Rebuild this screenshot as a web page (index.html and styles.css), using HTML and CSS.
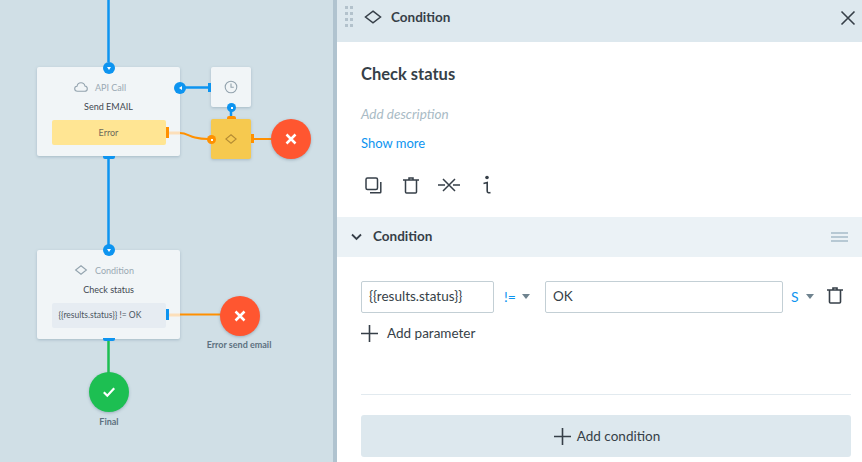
FILE: index.html
```html
<!DOCTYPE html>
<html lang="en">
<head>
<meta charset="utf-8">
<title>Condition</title>
<link rel="stylesheet" href="styles.css">
</head>
<body>
<div class="app">
  <section class="canvas">
    <div class="node card card-api">
      <div class="card-type">
        <svg width="14" height="10" viewBox="0 0 14 10"><path d="M3.500 9.300C1.800 9.300.7 8.200.7 6.800C.7 5.400 1.700 4.400 3 4.300C3.400 2 5 .7 7 .7C9 .7 10.500 2 10.900 4C12.300 4.200 13.300 5.300 13.300 6.700C13.300 8.200 12.200 9.300 10.700 9.300Z" fill="none" stroke="#93a3ae" stroke-width="1.100"/></svg>
        <span>API Call</span>
      </div>
      <div class="card-title">Send EMAIL</div>
      <div class="card-slot slot-error">Error</div>
    </div>

    <div class="node card card-condition">
      <div class="card-type">
        <svg width="14" height="10" viewBox="0 0 14 10"><path d="M7 .8L12.400 5L7 9.200L1.600 5Z" fill="none" stroke="#93a3ae" stroke-width="1.100"/></svg>
        <span>Condition</span>
      </div>
      <div class="card-title">Check status</div>
      <div class="card-slot slot-cond">{{results.status}} != OK</div>
    </div>

    <div class="node square square-timer">
      <svg width="14" height="14" viewBox="0 0 14 14"><circle cx="7" cy="7" r="5.800" fill="none" stroke="#93a3ae" stroke-width="1.100"/><path d="M7 3.500V7.300H9.800" fill="none" stroke="#93a3ae" stroke-width="1.100"/></svg>
    </div>
    <div class="node square square-yellow">
      <svg width="12" height="10" viewBox="0 0 12 10"><path d="M6 .8L11.200 5L6 9.200L.8 5Z" fill="none" stroke="#b48b33" stroke-width="1.100"/></svg>
    </div>

    <svg class="wires" width="333" height="462" viewBox="0 0 333 462">
      <path d="M108.500 0V62" class="w-blue"/>
      <path d="M108.500 156V246" class="w-blue"/>
      <path d="M180 87.500H209" class="w-blue"/>
      <path d="M231 107V117" class="w-blue"/>
      <path d="M168 133H180" class="w-fade"/>
      <path d="M180 133C186 133 189 136 195 137.500C199 138.500 203 139 208 139" class="w-orange"/>
      <path d="M251 139H275" class="w-orange"/>
      <path d="M168 315H180" class="w-fade"/>
      <path d="M180 314.500H222" class="w-orange"/>
      <path d="M108.500 338V375" class="w-green"/>
    </svg>

    <div class="node tab tab-api-bottom"></div>
    <div class="node tab tab-cond-bottom"></div>
    <div class="node tab tab-yellow-top"></div>
    <div class="node vtab vtab-timer"></div>
    <div class="node vtab vtab-error"></div>
    <div class="node vtab vtab-yellow"></div>
    <div class="node vtab vtab-cond"></div>

    <div class="node port port-api-in"><i class="tri-down"></i></div>
    <div class="node port port-cond-in"><i class="tri-down"></i></div>
    <div class="node port port-api-right"><i class="tri-left"></i></div>
    <div class="node port port-small port-timer-bottom"><i class="dot"></i></div>
    <div class="node port port-small port-orange port-yellow-left"><i class="dot"></i></div>

    <div class="node end end-red end-a">
      <svg width="14" height="14" viewBox="0 0 14 14"><path d="M2.500 2.500L11.500 11.500M11.500 2.500L2.500 11.500" stroke="#fff" stroke-width="2.500"/></svg>
    </div>
    <div class="node end end-red end-b">
      <svg width="14" height="14" viewBox="0 0 14 14"><path d="M2.500 2.500L11.500 11.500M11.500 2.500L2.500 11.500" stroke="#fff" stroke-width="2.500"/></svg>
    </div>
    <div class="node end end-green end-c">
      <svg width="14" height="12" viewBox="0 0 14 12"><path d="M1.800 6.200L5.300 9.700L12.200 2.300" fill="none" stroke="#fff" stroke-width="2.200"/></svg>
    </div>
    <div class="node end-label label-b">Error send email</div>
    <div class="node end-label label-c">Final</div>
  </section>

  <aside class="panel">
    <header class="panel-head">
      <div class="grip"><i></i><i></i><i></i><i></i><i></i><i></i><i></i><i></i></div>
      <svg class="head-diamond" width="18" height="14" viewBox="0 0 18 14"><path d="M9 1.200L16.500 7L9 12.800L1.500 7Z" fill="none" stroke="#363f48" stroke-width="1.500"/></svg>
      <span class="head-title">Condition</span>
      <svg class="head-close" width="16" height="16" viewBox="0 0 16 16"><path d="M1.500 1.500L14.500 14.500M14.500 1.500L1.500 14.500" stroke="#363f48" stroke-width="1.600"/></svg>
    </header>

    <div class="summary">
      <h1 class="name">Check status</h1>
      <p class="desc">Add description</p>
      <a class="more">Show more</a>
      <div class="tools">
        <svg width="17" height="17" viewBox="0 0 17 17"><rect x="1" y="1" width="11.500" height="11.500" rx="1.500" fill="none" stroke="#363f48" stroke-width="1.500"/><path d="M15.800 5V15C15.800 15.500 15.500 15.800 15 15.800H5" fill="none" stroke="#363f48" stroke-width="1.500"/></svg>
        <svg class="tool-trash" width="16" height="17" viewBox="0 0 16 17"><path d="M0 3H16M6 3V1H10V3M2.500 3V15C2.500 15.700 2.900 16 3.500 16H12.500C13.100 16 13.500 15.700 13.500 15V3" fill="none" stroke="#363f48" stroke-width="1.500"/></svg>
        <svg class="tool-cut" width="22" height="16" viewBox="0 0 22 16"><path d="M0 8H7M15 8H22M5 2L17 14M17 2L5 14" fill="none" stroke="#363f48" stroke-width="1.500"/></svg>
        <svg class="tool-info" width="10" height="20" viewBox="0 0 10 20"><circle cx="5" cy="2.500" r="1.800" fill="#363f48"/><path d="M1.500 8.500L5.200 7.500V16C5.200 17.500 6.500 18.300 8.500 17.500" fill="none" stroke="#363f48" stroke-width="1.600"/></svg>
      </div>
    </div>

    <div class="section-head">
      <svg width="11" height="8" viewBox="0 0 11 8"><path d="M1 1.500L5.500 6L10 1.500" fill="none" stroke="#363f48" stroke-width="1.800"/></svg>
      <span class="section-title">Condition</span>
      <div class="burger"><i></i><i></i><i></i></div>
    </div>

    <div class="rule-area">
      <div class="rule-row">
        <div class="field field-left">{{results.status}}</div>
        <span class="op">!=</span>
        <i class="caret caret-op"></i>
        <div class="field field-right">OK</div>
        <span class="type">S</span>
        <i class="caret caret-type"></i>
        <svg class="rule-trash" width="16" height="17" viewBox="0 0 16 17"><path d="M0 3H16M6 3V1H10V3M2.500 3V15C2.500 15.700 2.900 16 3.500 16H12.500C13.100 16 13.500 15.700 13.500 15V3" fill="none" stroke="#363f48" stroke-width="1.600"/></svg>
      </div>
      <div class="add-param">
        <svg width="17" height="17" viewBox="0 0 17 17"><path d="M8.500 0V17M0 8.500H17" stroke="#363f48" stroke-width="1.600"/></svg>
        <span>Add parameter</span>
      </div>
    </div>

    <div class="footer">
      <button class="add-cond">
        <svg width="17" height="17" viewBox="0 0 17 17"><path d="M8.500 0V17M0 8.500H17" stroke="#363f48" stroke-width="1.600"/></svg>
        <span>Add condition</span>
      </button>
    </div>
  </aside>
</div>
</body>
</html>
```

FILE: styles.css
```css
* { box-sizing: border-box; }
html, body { margin: 0; padding: 0; }
body {
  width: 862px;
  height: 462px;
  overflow: hidden;
  font-family: Lato, "Noto Sans", sans-serif;
  color: #363f48;
  background: #fff;
}
.app { display: flex; width: 862px; height: 462px; }

/* canvas */
.canvas {
  position: relative;
  flex: 0 0 337px;
  height: 462px;
  background: #d0dfe6;
  border-right: 4px solid #b0c3cf;
}
.wires { position: absolute; left: 0; top: 0; }
.wires path { fill: none; }
.w-blue { stroke: #0d94f0; stroke-width: 2.500; }
.w-orange { stroke: #ff9000; stroke-width: 2; }
.w-green { stroke: #1dbf52; stroke-width: 2.500; }
.w-fade { stroke: #fcdfba; stroke-width: 3; }

.node { position: absolute; }
.card {
  left: 37px;
  width: 143px;
  height: 89px;
  padding: 0 14px;
  background: #f1f5f7;
  border-radius: 2px;
  box-shadow: 0 1px 3px rgba(90, 120, 140, .35);
  display: flex;
  flex-direction: column;
  align-items: center;
}
.card-api { top: 67px; }
.card-condition { top: 250px; }
.card-type {
  align-self: flex-start;
  height: 20px;
  margin: 10px 0 0 23px;
  display: flex;
  align-items: center;
  gap: 7px;
  font-size: 9px;
  color: #9aa9b3;
}
.card-title { height: 19px; line-height: 19px; font-size: 9px; color: #3f4850; }
.card-slot {
  width: 114px;
  height: 25px;
  margin-top: 4px;
  border-radius: 2px;
  font-size: 9px;
  line-height: 25px;
  color: #6d6a5c;
  text-align: center;
}
.slot-error { background: #ffe593; }
.slot-cond { background: #e6ecf2; color: #4a5560; font-size: 8.500px; line-height: 24px; text-align: left; padding-left: 7px; }

.square {
  left: 211px;
  width: 40px;
  height: 40px;
  border-radius: 2px;
  box-shadow: 0 1px 3px rgba(90, 120, 140, .35);
  display: flex;
  align-items: center;
  justify-content: center;
}
.square-timer { top: 67px; background: #f1f5f7; }
.square-yellow { top: 119px; background: #f6c94f; }

.tab { width: 12px; height: 3px; background: #0d94f0; border-radius: 0 0 2px 2px; }
.tab-api-bottom { left: 103px; top: 156px; }
.tab-cond-bottom { left: 103px; top: 338px; }
.tab-yellow-top { left: 227px; top: 116px; background: #ff9000; border-radius: 2px 2px 0 0; width: 9px; }
.vtab { width: 3px; height: 11px; background: #0d94f0; }
.vtab-timer { left: 208px; top: 83px; height: 9px; }
.vtab-error { left: 166px; top: 127px; background: #ff9000; }
.vtab-yellow { left: 251px; top: 134px; width: 3px; height: 9px; background: #ff9000; }
.vtab-cond { left: 166px; top: 309px; }

.port {
  width: 12px;
  height: 12px;
  border-radius: 50%;
  background: #0d94f0;
  display: flex;
  align-items: center;
  justify-content: center;
}
.port-api-in { left: 103px; top: 62px; }
.port-cond-in { left: 103px; top: 244px; }
.port-api-right { left: 174px; top: 82px; }
.port-small { width: 9px; height: 9px; }
.port-timer-bottom { left: 227px; top: 103px; }
.port-yellow-left { left: 207px; top: 135px; }
.port-orange { background: #ff9000; }
.tri-down { border: 2px solid transparent; border-top: 3px solid #fff; border-bottom: 0; }
.tri-left { border: 2px solid transparent; border-right: 3px solid #fff; border-left: 0; }
.dot { width: 2px; height: 2px; background: #fff; }

.end {
  width: 40px;
  height: 40px;
  border-radius: 50%;
  box-shadow: 0 1px 3px rgba(90, 120, 140, .45);
  display: flex;
  align-items: center;
  justify-content: center;
}
.end-red { background: #ff5630; }
.end-green { background: #1dbf52; }
.end-a { left: 271px; top: 119px; }
.end-b { left: 220px; top: 296px; }
.end-c { left: 89px; top: 372px; }
.end-label { font-size: 9px; font-weight: 700; color: #5d7180; line-height: 12px; text-align: center; white-space: nowrap; }
.label-b { left: 199px; width: 80px; top: 339px; }
.label-c { left: 89px; width: 40px; top: 416px; }

/* panel */
.panel { flex: 1; min-width: 0; display: flex; flex-direction: column; background: #fff; }
.panel-head {
  height: 42px;
  flex: none;
  background: #dde8ee;
  display: flex;
  align-items: center;
  padding: 0 6px 8px 8px;
}
.grip { display: grid; grid-template-columns: 3px 3px; gap: 3px 2px; margin-right: 11px; margin-top: -2px; }
.grip i { width: 3px; height: 3px; background: #b3c2cc; }
.head-diamond { margin-right: 9px; }
.head-title { font-size: 13.500px; font-weight: 700; line-height: 18px; }
.head-close { margin-left: auto; margin-top: 1px; }

.summary { height: 175px; flex: none; padding: 20px 24px 0; }
.name { margin: 0; font-size: 16.500px; font-weight: 700; line-height: 24px; }
.desc { margin: 19px 0 0; font-size: 13.500px; font-style: italic; line-height: 18px; color: #a9bbc5; }
.more { display: block; margin-top: 11px; font-size: 13px; line-height: 18px; color: #0d94f0; }
.tools { display: flex; align-items: center; margin-top: 22px; margin-left: 4px; height: 22px; }
.tool-trash { margin-left: 21px; }
.tool-cut { margin-left: 19px; }
.tool-info { margin-left: 22px; }

.section-head {
  height: 40px;
  flex: none;
  background: #ebf2f6;
  display: flex;
  align-items: center;
  padding: 0 14px;
}
.section-title { margin-left: 11px; margin-top: -3px; font-size: 13.500px; font-weight: 700; }
.burger { margin-left: auto; display: flex; flex-direction: column; gap: 2px; }
.burger i { display: block; width: 17px; height: 2px; background: #b7c9d4; }

.rule-area { flex: 1; padding: 24px 11px 0 24px; }
.rule-row { display: flex; align-items: center; height: 32px; }
.field {
  height: 32px;
  border: 1px solid #c3cfd5;
  border-radius: 2px;
  padding: 0 7px;
  font-size: 13.500px;
  line-height: 28px;
}
.field-left { width: 133px; }
.field-right { width: 238px; }
.op { margin-left: 10px; width: 18px; font-size: 14px; color: #0d94f0; margin-top: -2px; }
.type { margin-left: 8px; width: 15px; font-size: 14px; color: #0d94f0; margin-top: -2px; }
.caret { flex: none; width: 8px; height: 5px; border: 4px solid transparent; border-top: 5px solid #6f838f; border-bottom: 0; margin-top: -2px; }
.caret-op { margin-right: 15px; }
.caret-type { margin-right: 13px; }
.rule-trash { margin-top: -3px; flex: none; }
.add-param { display: flex; align-items: center; gap: 9px; margin-top: 11px; height: 18px; font-size: 13.500px; }

.footer { height: 68px; flex: none; margin: 0 11px 0 24px; border-top: 1px solid #e2eaef; padding-top: 20px; }
.add-cond {
  width: 100%;
  height: 42px;
  border: 0;
  border-radius: 3px;
  background: #dde8ee;
  display: flex;
  align-items: center;
  justify-content: center;
  gap: 6px;
  padding: 0 0 0 2px;
  font: inherit;
  font-size: 13.500px;
  color: #363f48;
}
```
